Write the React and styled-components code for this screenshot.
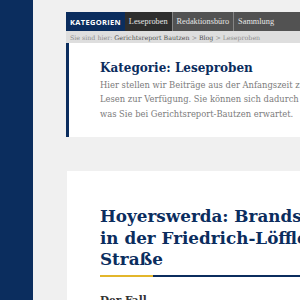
import React from 'react';
import styled, { createGlobalStyle } from 'styled-components';

const GlobalStyle = createGlobalStyle`
  html, body {
    margin: 0;
    padding: 0;
    background: #f0f0f0;
    overflow: hidden;
  }
  #root {
    width: 300px;
    height: 300px;
    overflow: hidden;
  }
`;

const Page = styled.div`
  display: flex;
  width: 700px;
  min-height: 340px;
  background: #f0f0f0;
`;

const Sidebar = styled.aside`
  width: 33px;
  flex-shrink: 0;
  background: #0b2d5e;
`;

const Main = styled.main`
  padding: 12px 0 0 33px;
  width: 420px;
  display: flex;
  flex-direction: column;

  & > * {
    flex-shrink: 0;
  }
`;

const NavBar = styled.nav`
  display: flex;
  height: 19px;
  background: #525252;
`;

const NavLabel = styled.span`
  display: flex;
  align-items: center;
  padding: 0 4px;
  background: #0b2d5e;
  color: #fff;
  font-family: 'Open Sans', 'DejaVu Sans', sans-serif;
  font-weight: 700;
  font-size: 7.5px;
  letter-spacing: 0.3px;
`;

const NavTab = styled.a`
  display: flex;
  align-items: center;
  padding: 0 4px;
  background: ${(p) => (p.$active ? '#2e2e2e' : '#525252')};
  color: #e6e6e6;
  font-family: 'Liberation Serif', serif;
  font-size: 8.3px;
  text-decoration: none;

  & + & {
    border-left: 1px solid #858585;
  }
`;

const Crumbs = styled.div`
  height: 12px;
  display: flex;
  align-items: center;
  padding-left: 4px;
  background: #dedede;
  color: #8c8c8c;
  font-family: 'DejaVu Serif', serif;
  font-size: 6.3px;
`;

const CrumbLink = styled.span`
  color: #505050;
  margin: 0 2px;
`;

const IntroBox = styled.section`
  background: #fff;
  border-left: 3px solid #0b2d5e;
  height: 94px;
  box-sizing: border-box;
  padding: 17px 0 0 31px;
`;

const IntroTitle = styled.h1`
  margin: 0 0 2px;
  color: #0b2d5e;
  font-family: 'DejaVu Serif', serif;
  font-weight: 700;
  font-size: 12px;
  line-height: 16px;
`;

const IntroText = styled.p`
  margin: 0;
  color: #7b7b7b;
  font-family: 'DejaVu Serif', serif;
  font-size: 8.4px;
  line-height: 14.4px;
  white-space: nowrap;
`;

const Article = styled.article`
  margin-top: 34px;
  margin-left: 1px;
  background: #fff;
  padding: 35px 0 0 33px;
  flex: 1 0 auto;
`;

const ArticleTitle = styled.h2`
  margin: 0;
  color: #0b2d5e;
  font-family: 'DejaVu Serif', serif;
  font-weight: 700;
  font-size: 16.8px;
  line-height: 21.5px;
  white-space: nowrap;
`;

const Rule = styled.div`
  display: flex;
  height: 2px;
  margin-top: 4px;
  width: 300px;
`;

const RuleSegment = styled.span`
  width: ${(p) => p.$w || 'auto'};
  flex: ${(p) => (p.$w ? 'none' : 1)};
  background: ${(p) => p.$color};
`;

const SubHead = styled.h3`
  margin: 17px 0 0;
  color: #333;
  font-family: 'DejaVu Serif', serif;
  font-weight: 700;
  font-size: 10.5px;
`;

function App() {
  return (
    <>
      <GlobalStyle />
      <Page>
        <Sidebar />
        <Main>
          <NavBar>
            <NavLabel>KATEGORIEN</NavLabel>
            <NavTab $active>Leseproben</NavTab>
            <NavTab>Redaktionsbüro</NavTab>
            <NavTab>Sammlung</NavTab>
          </NavBar>
          <Crumbs>
            Sie sind hier:<CrumbLink>Gerichtsreport Bautzen</CrumbLink>&gt;
            <CrumbLink>Blog</CrumbLink>&gt; Leseproben
          </Crumbs>
          <IntroBox>
            <IntroTitle>Kategorie: Leseproben</IntroTitle>
            <IntroText>
              Hier stellen wir Beiträge aus der Anfangszeit zum
              <br />
              Lesen zur Verfügung. Sie können sich dadurch einen Eindruck verschaffen,
              <br />
              was Sie bei Gerichtsreport-Bautzen erwartet.
            </IntroText>
          </IntroBox>
          <Article>
            <ArticleTitle>
              Hoyerswerda: Brandstiftung
              <br />
              in der Friedrich-Löffler-
              <br />
              Straße
            </ArticleTitle>
            <Rule>
              <RuleSegment $w="53px" $color="#e3b62b" />
              <RuleSegment $color="#0b2d5e" />
            </Rule>
            <SubHead>Der Fall</SubHead>
          </Article>
        </Main>
      </Page>
    </>
  );
}

export default App;
